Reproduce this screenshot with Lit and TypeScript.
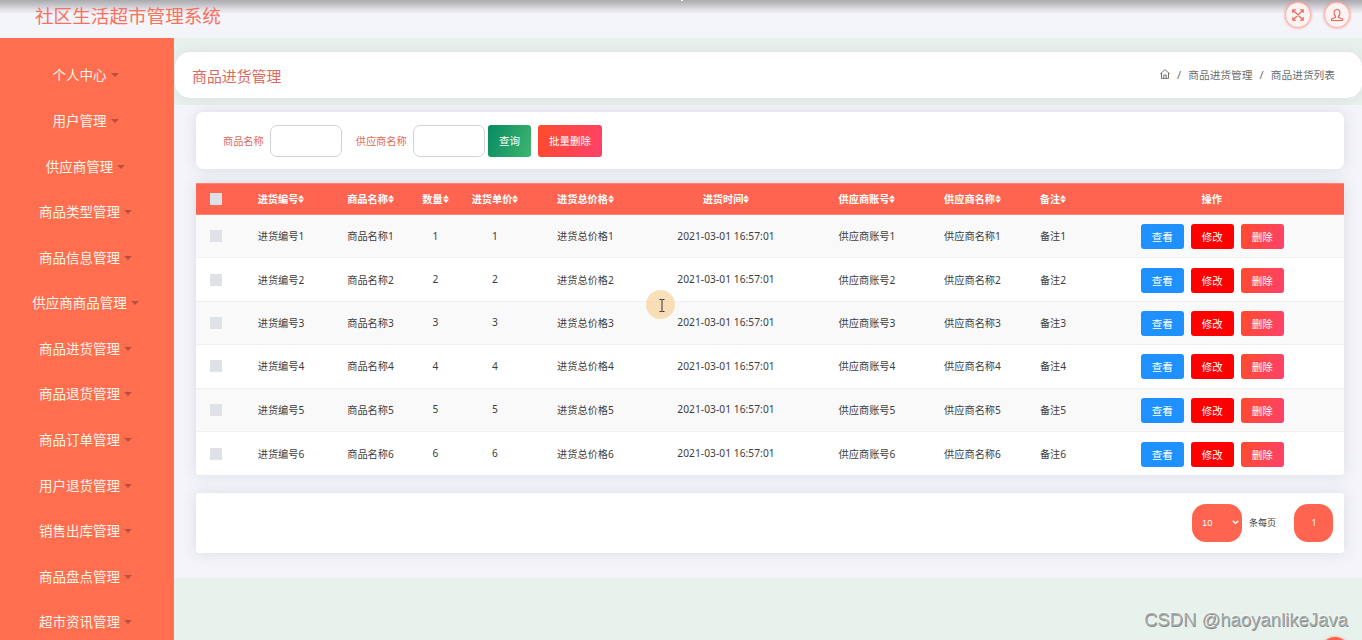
import { LitElement, html, css, svg } from "lit";
import { customElement } from "lit/decorators.js";

const MENU = ["个人中心", "用户管理", "供应商管理", "商品类型管理", "商品信息管理", "供应商商品管理", "商品进货管理",
  "商品退货管理", "商品订单管理", "用户退货管理", "销售出库管理", "商品盘点管理", "超市资讯管理"];
const COLUMNS = ["进货编号", "商品名称", "数量", "进货单价", "进货总价格", "进货时间", "供应商账号", "供应商名称", "备注"];
const ROWS = [1, 2, 3, 4, 5, 6].map((n) => [
  `进货编号${n}`, `商品名称${n}`, `${n}`, `${n}`, `进货总价格${n}`, "2021-03-01 16:57:01",
  `供应商账号${n}`, `供应商名称${n}`, `备注${n}`,
]);

const sortIcon = svg`<svg class="sort" viewBox="0 0 6 8"><path d="M3 0L6 3.4H0zM3 8L0 4.6H6z" fill="#fff"/></svg>`;

@customElement("app-root")
export class AppRoot extends LitElement {
  static styles = css`
    :host {
      display: block; position: relative; width: 1362px; height: 640px; overflow: hidden;
      background: #e8f2ec; color: #3c3c3c;
      font-family: "Noto Sans", "Noto Sans CJK SC", sans-serif; font-size: 10.2px;
    }
    * { box-sizing: border-box; }
    .header {
      height: 38px; display: flex; justify-content: space-between; padding: 0 12px 0 35px;
      background: linear-gradient(#aaa9ae 0, #bfbec4 4px, #dedde3 9px, #f4f4fb 14px);
    }
    .brand { font-size: 18.6px; line-height: 32px; color: #f9705c; white-space: nowrap; }
    .tools { display: flex; gap: 13px; padding-top: 2px; }
    .tool {
      width: 26px; height: 26px; border-radius: 50%; background: #fdf3f2; border: 1px solid #fbb9b0;
      box-shadow: 0 0 3px #ff8d7d; display: grid; place-items: center;
    }
    .tool svg { width: 14px; height: 14px; }
    .body { display: flex; height: 602px; }
    .side { width: 174px; flex: none; background: #ff6e4e; padding-top: 14.6px; border-right: 1px solid #f8785c; }
    .item {
      height: 45.58px; display: flex; align-items: center; justify-content: center; gap: 4px;
      padding-right: 2px; font-size: 13.5px; color: #fff4e9; white-space: nowrap;
    }
    .item span { margin-top: -2px; }
    .caret { border: 4px solid transparent; border-top-color: #b9503a; border-bottom: 0; }
    .main { flex: 1; min-width: 0; }
    .crumbs-area { height: 67px; padding-top: 14px; background: #e8f2ec; overflow: hidden; }
    .crumbs {
      height: 46px; margin-left: 1px; border-radius: 15px; background: #fff; padding: 0 27px 0 17px;
      display: flex; align-items: center; justify-content: space-between;
      box-shadow: 0 0 14px rgba(218, 213, 222, .75);
    }
    .title { font-size: 14.9px; color: #dc6a5e; }
    .path { display: flex; align-items: center; font-size: 10.7px; color: #6c6c6c; padding-bottom: 2px; }
    .path svg { width: 10px; height: 10px; }
    .slash { padding: 0 7.2px; font-size: 11px; }
    .content { height: 473px; background: #f4f4fa; padding: 7px 18px 0 22px; }
    .card { background: #fff; box-shadow: 0 0 14px rgba(205, 205, 218, .65); }
    .filter { height: 57px; border-radius: 7px; display: flex; align-items: center; padding-left: 27px; color: #e0695f; }
    .filter > span { margin-top: -1px; }
    .input { width: 72px; height: 32px; border: 1px solid #d3d3d5; border-radius: 7px; background: #fff; margin: 0 13.6px 0 6.400px; }
    .input.last { margin-right: 3px; }
    .btn { height: 25px; width: 43px; border-radius: 3px; color: #fff; font-size: 10.5px; display: grid; place-items: center; }
    .filter .btn { height: 32px; }
    .query { background: linear-gradient(110deg, #078a62, #3fb56f); }
    .batch { margin-left: 7px; background: linear-gradient(110deg, #ff4b2b, #ff416c); }
    .filter .batch { width: 64px; }
    .table { margin-top: 14px; height: 292.4px; border-radius: 0 0 3px 3px; }
    .row {
      height: 43.4px; display: grid; align-items: center; justify-items: center; white-space: nowrap;
      grid-template-columns: 40.5px 89px 90px 40px 79px 102px 179px 103px 108px 53px 264.5px;
      border-bottom: 1px solid #efeff6;
    }
    .row:nth-child(even) { background: #f9f9fa; }
    .row:last-child { border-bottom: 0; }
    .row.head { height: 32px; background: #ff6450; color: #fff; font-weight: 700; border: solid #ff8474; border-width: 1px 0; }
    .cell { margin-top: -1px; }
    .time { letter-spacing: .06px; }
    .th { display: flex; align-items: center; margin-top: -1px; }
    .sort { width: 6px; height: 8px; margin-top: 1px; }
    .check { width: 12px; height: 12px; background: #dee1e6; }
    .actions { display: flex; gap: 7px; padding: 1px 0 0 1px; }
    .view { background: #1e90ff; }
    .edit { background: #f00; }
    .del { background: linear-gradient(110deg, #ff4b2b, #ff416c); }
    .pager { margin-top: 17.6px; height: 60px; border-radius: 3px; display: flex; align-items: center; justify-content: flex-end; padding-right: 11px; font-size: 9px; }
    .size { width: 50px; height: 38px; border-radius: 14px; background: #ff6450; color: #fff; display: flex; align-items: center; justify-content: space-between; padding: 0 3px 0 10px; font-family: "Liberation Sans", sans-serif; font-size: 9.4px; }
    .size svg { width: 7px; height: 5px; }
    .unit { margin: 0 18px 0 7px; }
    .page { width: 39px; height: 38px; border-radius: 14px; background: #ff6450; color: #fff; display: grid; place-items: center; padding-left: 1px; }
    .notch { position: absolute; left: 681px; top: 0; width: 2px; height: 1px; background: #fff; }
    .pointer { position: absolute; left: 646px; top: 290px; width: 29px; height: 29px; border-radius: 50%; background: rgba(247, 208, 147, .66); }
    .pointer svg { position: absolute; left: 13px; top: 9px; width: 6px; height: 13px; }
    .mark { position: absolute; right: 14px; top: 608px; font: 18.5px/24px "Liberation Sans", sans-serif; color: #a3a8a6; text-shadow: -1px -1px 0 #f4f7f5, .5px .5px 0 #858987; white-space: nowrap; }
    .top { position: absolute; left: 1321px; top: 637px; width: 28px; height: 28px; border-radius: 50%; background: #ff5f4d; box-shadow: 0 0 3px #ff8d7d; }
  `;

  render() {
    return html`
      <div class="header">
        <div class="brand">社区生活超市管理系统</div>
        <div class="tools">
          <div class="tool"><svg viewBox="0 0 14 14" fill="none" stroke="#ee6556" stroke-width="1.1"><path d="M2 2l10 10M12 2L2 12M1.8 5V1.8H5M9 1.8h3.2V5M1.8 9v3.2H5M9 12.2h3.2V9"/></svg></div>
          <div class="tool"><svg viewBox="0 0 14 14" fill="none" stroke="#ee6556" stroke-width="1.1"><path d="M5.5 8.2C3.2 6.3 3.6 1.5 7 1.5S10.800 6.300 8.500 8.200V9.300L12.500 11V12.500H1.500V11L5.500 9.300z"/></svg></div>
        </div>
      </div>
      <div class="body">
        <div class="side">${MENU.map((m) => html`<div class="item"><span>${m}</span><i class="caret"></i></div>`)}</div>
        <div class="main">
          <div class="crumbs-area">
            <div class="crumbs">
              <div class="title">商品进货管理</div>
              <div class="path">
                <svg viewBox="0 0 10 10" fill="none" stroke="#666" stroke-width=".9"><path d="M.3 4.800L5 .7 9.700 4.800M1.500 4V9.400H8.500V4M3.800 9.400V6H6.200V9.400"/></svg>
                <span class="slash">/</span><span>商品进货管理</span><span class="slash">/</span><span>商品进货列表</span>
              </div>
            </div>
          </div>
          <div class="content">
            <div class="card filter">
              <span>商品名称</span><div class="input"></div>
              <span>供应商名称</span><div class="input last"></div>
              <div class="btn query">查询</div><div class="btn batch">批量删除</div>
            </div>
            <div class="card table">
              <div class="row head">
                <i class="check"></i>
                ${COLUMNS.map((c) => html`<div class="th">${c}${sortIcon}</div>`)}
                <div class="cell">操作</div>
              </div>
              ${ROWS.map((r) => html`<div class="row">
                <i class="check"></i>${r.map((c, i) => html`<div class="cell ${i === 5 ? "time" : ""}">${c}</div>`)}
                <div class="actions"><div class="btn view">查看</div><div class="btn edit">修改</div><div class="btn del">删除</div></div>
              </div>`)}
            </div>
            <div class="card pager">
              <div class="size">10<svg viewBox="0 0 7 5" fill="none" stroke="#fff" stroke-width="1.400"><path d="M.8 .8L3.500 3.600 6.200 .8"/></svg></div>
              <span class="unit">条每页</span>
              <div class="page">1</div>
            </div>
          </div>
        </div>
      </div>
      <i class="notch"></i>
      <div class="pointer"><svg viewBox="0 0 6 13" fill="none" stroke="#333"><path d="M.5 .5H2.500L3 1 3.500 .5H5.500M3 1V12M.5 12.500H2.500L3 12 3.500 12.500H5.500"/></svg></div>
      <div class="mark">CSDN @haoyanlikeJava</div>
      <i class="top"></i>
    `;
  }
}
